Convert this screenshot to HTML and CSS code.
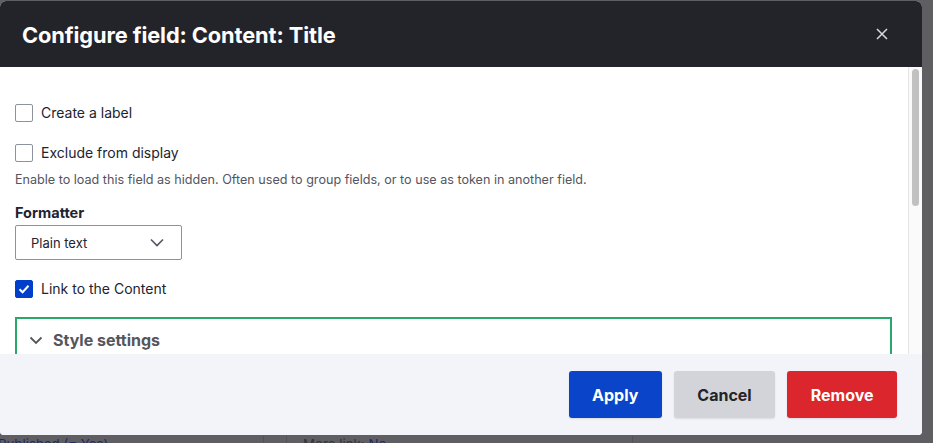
FILE: index.html
```html
<!DOCTYPE html>
<html lang="en">
<head>
<meta charset="utf-8">
<title>Configure field</title>
<link rel="stylesheet" href="styles.css">
</head>
<body>
<div class="screen">
  <div class="dialog">
    <div class="dialog-header">
      <h1 class="dialog-title">Configure field: Content: Title</h1>
      <button class="dialog-close" aria-label="Close">
        <svg width="12" height="12" viewBox="0 0 12 12"><path d="M1 1L11 11M11 1L1 11" stroke="#d8d9de" stroke-width="1.5" fill="none"/></svg>
      </button>
    </div>
    <div class="dialog-body">
      <div class="dialog-content">
        <label class="check-row row-first">
          <span class="checkbox"></span>
          <span class="check-label">Create a label</span>
        </label>
        <label class="check-row row-second">
          <span class="checkbox"></span>
          <span class="check-label">Exclude from display</span>
        </label>
        <div class="description">Enable to load this field as hidden. Often used to group fields, or to use as token in another field.</div>
        <div class="field-label">Formatter</div>
        <div class="select">
          <span class="select-value">Plain text</span>
          <svg class="select-chevron" width="14" height="9" viewBox="0 0 14 9"><path d="M1 1.5L7 7.5L13 1.5" stroke="#545560" stroke-width="1.6" fill="none"/></svg>
        </div>
        <label class="check-row row-link">
          <span class="checkbox checked">
            <svg width="12" height="10" viewBox="0 0 12 10"><path d="M1.5 5.2L4.6 8.2L10.5 1.8" stroke="#fff" stroke-width="2" fill="none"/></svg>
          </span>
          <span class="check-label">Link to the Content</span>
        </label>
        <div class="details">
          <div class="summary">
            <svg class="summary-chevron" width="14" height="9" viewBox="0 0 14 9"><path d="M1.5 1.5L7 7L12.5 1.5" stroke="#55565b" stroke-width="1.8" fill="none"/></svg>
            <span class="summary-text">Style settings</span>
          </div>
          <div class="details-body"></div>
        </div>
      </div>
      <div class="scrollbar"><div class="scroll-thumb"></div></div>
    </div>
    <div class="dialog-footer">
      <button class="btn btn-primary">Apply</button>
      <button class="btn btn-secondary">Cancel</button>
      <button class="btn btn-danger">Remove</button>
    </div>
  </div>
  <div class="behind">
    <div class="behind-cell cell-a"><span class="behind-link">Published (= Yes)</span></div>
    <div class="behind-cell cell-b"></div>
    <div class="behind-cell cell-c"><span class="behind-muted">More link:</span> <span class="behind-link">No</span></div>
    <div class="behind-cell cell-d"></div>
  </div>
</div>
</body>
</html>
```

FILE: styles.css
```css
* { box-sizing: border-box; }
html, body {
  margin: 0;
  padding: 0;
}
body {
  background: #5e5e63;
  font-family: Inter, "Noto Sans", "Liberation Sans", sans-serif;
  color: #222330;
  overflow: hidden;
  height: 443px;
}
.screen {
  padding-top: 1px;
  width: 933px;
}
.dialog {
  width: 922px;
  border-radius: 6px 6px 4px 4px;
  overflow: hidden;
  background: #fff;
}
.dialog-header {
  height: 66px;
  background: #232429;
  display: flex;
  align-items: center;
  padding: 0 34px 0 22px;
}
.dialog-title {
  margin: 0;
  font-size: 21.8px;
  font-weight: 700;
  color: #fff;
  letter-spacing: -0.1px;
  padding-top: 2px;
}
.dialog-close {
  margin-left: auto;
  background: none;
  border: 0;
  padding: 0;
  width: 12px;
  height: 12px;
  display: flex;
}
.dialog-body {
  display: flex;
  height: 287px;
  background: #fff;
}
.dialog-content {
  flex: 1;
  overflow: hidden;
  padding: 37px 16px 0 15px;
}
.scrollbar {
  width: 14px;
  background: #fafafa;
  border-left: 1px solid #e6e6e6;
  padding: 2px 3px 0 3px;
}
.scroll-thumb {
  height: 137px;
  background: #c1c1c1;
  border-radius: 4px;
}
.check-row {
  display: flex;
  align-items: center;
  height: 18px;
  font-size: 14px;
  line-height: 18px;
}
.row-second { margin-top: 22px; }
.row-link { margin-top: 20px; }
.checkbox {
  width: 18px;
  height: 18px;
  border: 1px solid #8e929c;
  border-radius: 2px;
  background: #fff;
  margin-right: 8px;
  display: flex;
  align-items: center;
  justify-content: center;
  flex-shrink: 0;
}
.checkbox.checked {
  background: #003ecc;
  border-color: #003ecc;
}
.description {
  margin-top: 10px;
  font-size: 12.6px;
  line-height: 16px;
  color: #545560;
}
.field-label {
  margin-top: 16px;
  font-size: 14.5px;
  font-weight: 700;
  line-height: 18px;
}
.select {
  margin-top: 3px;
  width: 167px;
  height: 35px;
  border: 1px solid #8e929c;
  border-radius: 2px;
  display: flex;
  align-items: center;
  padding: 0 17px 0 15px;
  font-size: 13px;
}
.select-chevron { margin-left: auto; }
.details {
  margin-top: 19px;
  border: 2px solid #28a96b;
  border-bottom: 0;
  height: 200px;
}
.summary {
  display: flex;
  align-items: center;
  height: 44px;
  padding: 0 0 2px 12px;
}
.summary-chevron { margin-right: 10px; }
.summary-text {
  font-size: 16px;
  font-weight: 700;
  color: #55565b;
}
.dialog-footer {
  height: 81px;
  background: #f3f4f9;
  display: flex;
  align-items: center;
  justify-content: flex-end;
  gap: 12px;
  padding-right: 25px;
}
.btn {
  height: 47px;
  border: 0;
  border-radius: 3px;
  font-family: inherit;
  font-size: 16px;
  font-weight: 700;
  padding: 0 23.5px;
  box-shadow: 0 1px 2px rgba(0,0,0,0.1);
}
.btn-primary { background: #0a45c9; color: #fff; }
.btn-secondary { background: #d3d4d9; color: #232429; }
.btn-danger { background: #da262c; color: #fff; }
.behind {
  display: flex;
  height: 30px;
  font-size: 13.3px;
  line-height: 16px;
  padding-top: 1px;
}
.behind-cell {
  padding-left: 0;
  white-space: nowrap;
}
.cell-a { width: 266px; margin-left: -2px; border-right: 1px solid #525257; }
.cell-b { width: 23px; border-right: 1px solid #525257; }
.cell-c { width: 346px; padding-left: 16px; border-right: 1px solid #525257; }
.cell-d { flex: 1; }
.behind-link { color: #1e2a66; }
.behind-muted { color: #333338; }
```
